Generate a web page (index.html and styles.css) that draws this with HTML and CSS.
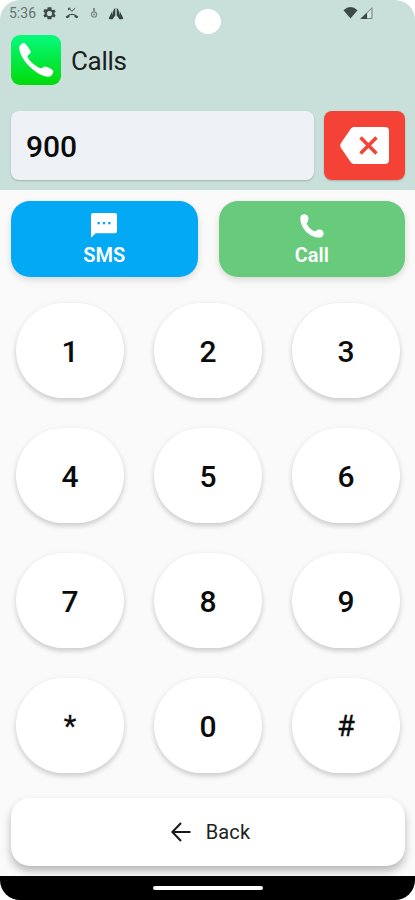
FILE: index.html
```html
<!DOCTYPE html>
<html lang="en">
<head>
<meta charset="utf-8">
<title>Calls</title>
<link rel="stylesheet" href="styles.css">
</head>
<body>
<div class="phone">
  <header class="header">
    <div class="status">
      <span class="time">5:36</span>
      <svg class="gear" viewBox="2 2 20 20"><path fill="#3d4a47" fill-rule="evenodd" d="M19.4 13c.1-.3.1-.7.1-1s0-.7-.1-1l2.1-1.6-2-3.5-2.5 1a8 8 0 0 0-1.700-1L15 2.200H9L8.700 5a8 8 0 0 0-1.700 1l-2.500-1-2 3.500L4.600 11a8 8 0 0 0 0 2l-2.100 1.600 2 3.500 2.500-1a8 8 0 0 0 1.700 1l.3 2.700h6l.3-2.700a8 8 0 0 0 1.700-1l2.500 1 2-3.500zM12 8a4 4 0 1 1 0 8 4 4 0 0 1 0-8z"/></svg>
      <svg class="missed" viewBox="0 0 14 12"><path d="M3.500 3.200V1.200h2M3.800 1.500 7 4.200l3.200-3" fill="none" stroke="#3d4a47"/><path d="M.5 9.700Q7 4 13.500 9.700l-1.700 1.600-2.300-1.300V8.300Q7 7.600 4.500 8.300V10l-2.300 1.300z" fill="#3d4a47"/></svg>
      <svg class="mic" viewBox="0 0 8 12"><path d="M4 1v3.500" stroke="#7f8d89" stroke-width="2"/><circle cx="4" cy="7.500" r="2.600" fill="none" stroke="#7f8d89" stroke-width="1.300"/><circle cx="4" cy="7.500" r="1" fill="#7f8d89"/></svg>
      <svg class="hands" viewBox="0 0 16 13"><path d="M7.300.8v7.700L4.500 12.300H1.500l1.800-2.600L4.600 7.500 5.500 3zM8.700.8v7.700l2.800 3.800h3l-1.800-2.600-1.300-2.200L10.500 3zM4.300 4 .6 11.500l1.200.6L4.300 8zM11.700 4l3.700 7.500-1.200.6L11.700 8z" fill="#35413e"/></svg>
      <svg class="wifi" viewBox="0 0 15 13"><path d="M7.500 12.500.5 4.200Q7.500-2.300 14.500 4.200z" fill="#3d4a47"/></svg>
      <svg class="signal" viewBox="0 0 13 13"><path d="M12 1.200V12H1.200z" fill="none" stroke="#74817d"/><path d="M7 6.200V12.500H.3z" fill="#3d4a47"/><path d="M8.500 6.500v5M10 6v4" stroke="#e5efeb"/></svg>
    </div>
    <div class="camera"></div>
    <div class="title">
      <div class="app-icon"><svg viewBox="0 0 50 50"><path d="M8.200 12.500c0-2 3-5.300 5-4.500 2 1 7 7.600 6.600 9.600-.3 1.500-3.600 2.700-3.200 4.200 1.400 4.400 8.400 9.900 13 11.400 1.700.5 2.600-1.800 4.300-1.800 2.200.1 7.600 2.600 8.300 4.500.5 2-1.800 5.600-4.300 5.800C27 42.200 8.400 25 8.200 12.500z" fill="#fff"/></svg></div>
      <h1>Calls</h1>
    </div>
    <div class="entry">
      <div class="number">900</div>
      <button class="delete" aria-label="Delete"><svg viewBox="0 0 50 38"><path d="M14 0h31q4 0 4 4v29q0 4-4 4H14q-2 0-3.200-1.700L1 21q-1.500-2.500 0-5L10.800 1.700Q12 0 14 0z" fill="#fff"/><path d="m20.500 10.500 16 16m0-16-16 16" stroke="#f44336" stroke-width="3.500"/></svg></button>
    </div>
  </header>
  <main class="content">
    <div class="actions">
      <button class="action sms"><svg viewBox="2 2 20 20"><path fill="#fff" fill-rule="evenodd" d="M20.500 2h-17A1.500 1.500 0 0 0 2 3.500V21l3.600-3.400h14.900a1.500 1.500 0 0 0 1.500-1.500V3.500A1.500 1.500 0 0 0 20.500 2zM8.800 10.700H7V9h1.800zm4.100 0h-1.800V9h1.800zm4.100 0h-1.800V9H17z"/></svg>SMS</button>
      <button class="action call"><svg viewBox="0 0 24 24"><path fill="#fff" d="M.3 4C.3 1.700 2 .2 4.200.2S8.400 1.800 8.400 4.200c0 2-.5 4.200-1.900 5 1.700 4 4.600 6.800 8.700 8.300 1-1.400 2.800-1.900 4.700-1.900 2.300 0 3.800 1.800 3.800 4s-1.600 4-4 4C9.500 23.600.3 14.300.3 4z"/></svg>Call</button>
    </div>
    <div class="keypad">
      <button>1</button><button>2</button><button>3</button>
      <button>4</button><button>5</button><button>6</button>
      <button>7</button><button>8</button><button>9</button>
      <button class="symbol">*</button><button>0</button><button class="symbol">#</button>
    </div>
    <button class="back"><svg viewBox="0 0 20 20"><path d="M19.500 10H1.500M10 1 1.300 10l8.700 9" fill="none" stroke="#171717" stroke-width="2"/></svg>Back</button>
  </main>
  <footer class="nav"><div class="handle"></div></footer>
</div>
</body>
</html>
```
FILE: styles.css
```css
* { box-sizing: border-box; }
body { margin: 0; background: #fff; font-family: Roboto, sans-serif; color: #0b0b0b; }
button { border: 0; padding: 0; font-family: inherit; color: inherit; }
svg { display: block; flex: none; }
.phone { width: 415px; height: 900px; display: flex; flex-direction: column; overflow: hidden; border-radius: 20px; background: #fafafa; }
.header { position: relative; height: 190px; flex: none; padding: 0 10px; background: #c9dfda; }
.status { height: 26px; display: flex; align-items: center; }
.time { width: 33px; margin-left: -1px; margin-right: 1px; font-size: 14px; line-height: 26px; color: #65736f; }
.gear { width: 13px; height: 13px; }
.missed { width: 14px; height: 12px; margin-left: 9px; }
.mic { width: 8px; height: 12px; margin-left: 11px; }
.hands { width: 16px; height: 13px; margin-left: 10px; }
.wifi { width: 15px; height: 13px; margin-left: auto; margin-top: -2px; }
.signal { width: 13px; height: 14px; margin: 0 32px 0 2px; }
.camera { position: absolute; left: 195px; top: 9px; width: 26px; height: 25px; border-radius: 50%; background: #fff; }
.title { display: flex; align-items: center; height: 50px; margin-top: 9px; padding-left: 1px; }
.app-icon { width: 50px; height: 50px; border-radius: 9px; background: linear-gradient(#06fa7d, #02da09); }
.app-icon svg { width: 50px; height: 50px; }
h1 { margin: 1px 0 0 10px; font-size: 26px; font-weight: 400; line-height: 30px; letter-spacing: -.3px; color: #1b211f; }
.entry { display: flex; gap: 10px; height: 69px; margin-top: 26px; padding-left: 1px; }
.number { width: 303px; border-radius: 8px; padding-left: 15px; font-size: 30px; font-weight: 500; line-height: 71px; background: #eef2f6; box-shadow: 0 1px 2px #0003; }
.delete { width: 81px; border-radius: 8px; display: grid; place-items: center; background: #f44336; box-shadow: 0 1px 2px #0003; }
.delete svg { width: 50px; height: 38px; }
.content { flex: 1; padding: 11px 10px 0 11px; }
.actions { display: flex; gap: 21px; }
.action { flex: 1; height: 76px; border-radius: 19px; display: flex; flex-direction: column; align-items: center; padding-top: 12px; font-size: 20px; font-weight: 600; line-height: 24px; color: #fff; box-shadow: 0 3px 7px #0002; }
.action svg { width: 26px; height: 26px; margin-bottom: 4px; }
.call svg { width: 24px; height: 24px; margin: 1px 0 5px; }
.sms { background: #03a9f4; }
.call { background: #68ca7b; }
.keypad { display: grid; grid-template-columns: repeat(3, 108px); grid-auto-rows: 95px; gap: 30px; margin: 26px 0 0 5px; }
.keypad button { border-radius: 48px; padding-top: 1px; font-size: 30px; font-weight: 500; background: #fff; box-shadow: 0 3px 5px #00000028, 0 1px 7px #0000000d; }
.keypad .symbol { font-size: 29px; font-weight: 400; -webkit-text-stroke: .3px #0b0b0b; }
.back { width: 100%; height: 68px; margin-top: 25px; border-radius: 19px; display: flex; align-items: center; justify-content: center; gap: 15px; padding: 0 0 1px 5px; font-size: 20px; letter-spacing: .2px; color: #222; background: #fff; box-shadow: 0 5px 9px #00000045; }
.back svg { width: 20px; height: 20px; }
.nav { position: relative; height: 24px; flex: none; display: flex; justify-content: center; padding-top: 10px; background: #000; }
.handle { width: 110px; height: 4px; border-radius: 2px; background: #fff; }
```
